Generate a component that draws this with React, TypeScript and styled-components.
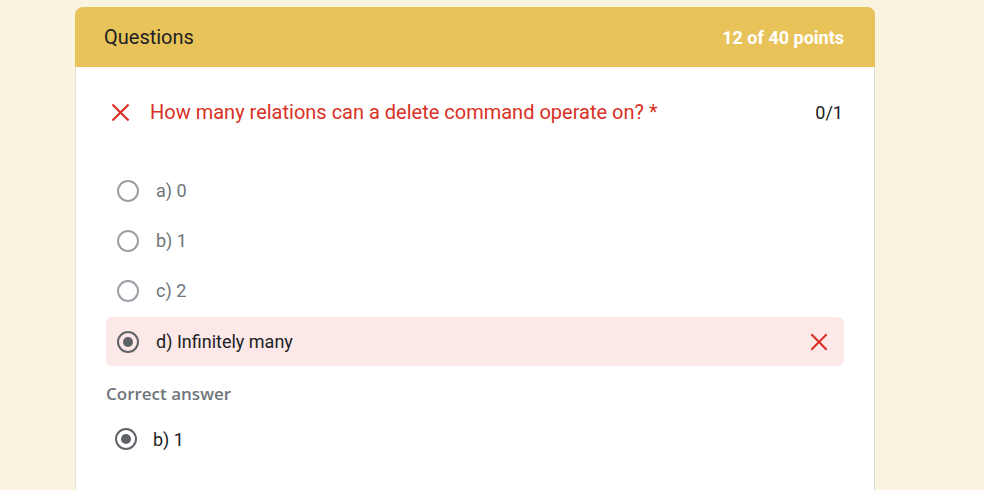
import styled, { createGlobalStyle } from "styled-components";

const GlobalStyle = createGlobalStyle`
  body {
    margin: 0;
    background: #faf3df;
    font-family: Roboto, "Liberation Sans", sans-serif;
  }
`;

const Page = styled.div`
  height: 490px;
  overflow: hidden;
  padding: 7px 0 0 75px;
`;

const Card = styled.div`
  width: 800px;
  background: #fff;
  border-radius: 8px 8px 0 0;
  border-right: 1px solid #dadce0;
  border-left: 1px solid #e6e2d6;
  box-sizing: border-box;
  min-height: 490px;
`;

const Header = styled.div`
  display: flex;
  align-items: center;
  justify-content: space-between;
  height: 60px;
  padding: 0 31px 0 29px;
  background: #e8c35a;
  border-radius: 8px 8px 0 0;
  margin: 0 -1px;
`;

const Title = styled.div`
  font-size: 20px;
  color: #202124;
`;

const Score = styled.div`
  font-size: 18px;
  font-weight: 700;
  color: #fff;
`;

const Body = styled.div`
  padding: 21px 30px 0 30px;
`;

const QuestionRow = styled.div`
  display: flex;
  align-items: center;
  height: 48px;
  padding-left: 5px;
`;

const QuestionText = styled.div`
  flex: 1;
  margin-left: 20px;
  font-size: 20px;
  color: #d93025;
`;

const Points = styled.div`
  font-size: 18px;
  color: #202124;
  padding-right: 1px;
`;

const Options = styled.div`
  margin-top: 29px;
  display: flex;
  flex-direction: column;
`;

const Option = styled.div<{ $wrong?: boolean }>`
  display: flex;
  align-items: center;
  height: 49px;
  margin-top: ${(p) => (p.$wrong ? "2px" : "1px")};
  padding: 0 16px 0 11px;
  border-radius: 6px;
  background: ${(p) => (p.$wrong ? "#fce8e6" : "transparent")};
`;

const Radio = styled.span<{ $checked?: boolean; $dark?: boolean }>`
  width: 22px;
  height: 22px;
  box-sizing: border-box;
  border-radius: 50%;
  border: 2px solid ${(p) => (p.$dark ? "#5f6368" : "#9aa0a6")};
  display: flex;
  align-items: center;
  justify-content: center;
  flex-shrink: 0;
  &::after {
    content: "";
    display: ${(p) => (p.$checked ? "block" : "none")};
    width: 10px;
    height: 10px;
    border-radius: 50%;
    background: #5f6368;
  }
`;

const Label = styled.span<{ $strong?: boolean }>`
  flex: 1;
  margin-left: 17px;
  font-size: 18px;
  color: ${(p) => (p.$strong ? "#202124" : "#70757a")};
`;

const SectionLabel = styled.div`
  margin-top: 16px;
  font-size: 17px;
  font-weight: 600;
  color: #70757a;
  font-family: "Open Sans", Roboto, sans-serif;
`;

const CorrectOption = styled.div`
  display: flex;
  align-items: center;
  height: 40px;
  margin-top: 14px;
  padding-left: 9px;
`;

const CorrectLabel = styled.span`
  margin-left: 16px;
  font-size: 18px;
  color: #202124;
`;

function Cross({ size }: { size: number }) {
  return (
    <svg width={size} height={size} viewBox="0 0 20 20">
      <path d="M1.5 1.5 L18.5 18.5 M18.5 1.5 L1.5 18.5" stroke="#d93025" strokeWidth="2.3" fill="none" />
    </svg>
  );
}

const choices = ["a) 0", "b) 1", "c) 2"];

export default function App() {
  return (
    <>
      <GlobalStyle />
      <Page>
        <Card>
          <Header>
            <Title>Questions</Title>
            <Score>12 of 40 points</Score>
          </Header>
          <Body>
            <QuestionRow>
              <Cross size={19} />
              <QuestionText>How many relations can a delete command operate on? *</QuestionText>
              <Points>0/1</Points>
            </QuestionRow>
            <Options>
              {choices.map((c) => (
                <Option key={c}>
                  <Radio />
                  <Label>{c}</Label>
                </Option>
              ))}
              <Option $wrong>
                <Radio $checked $dark />
                <Label $strong>d) Infinitely many</Label>
                <Cross size={18} />
              </Option>
            </Options>
            <SectionLabel>Correct answer</SectionLabel>
            <CorrectOption>
              <Radio $checked $dark />
              <CorrectLabel>b) 1</CorrectLabel>
            </CorrectOption>
          </Body>
        </Card>
      </Page>
    </>
  );
}
